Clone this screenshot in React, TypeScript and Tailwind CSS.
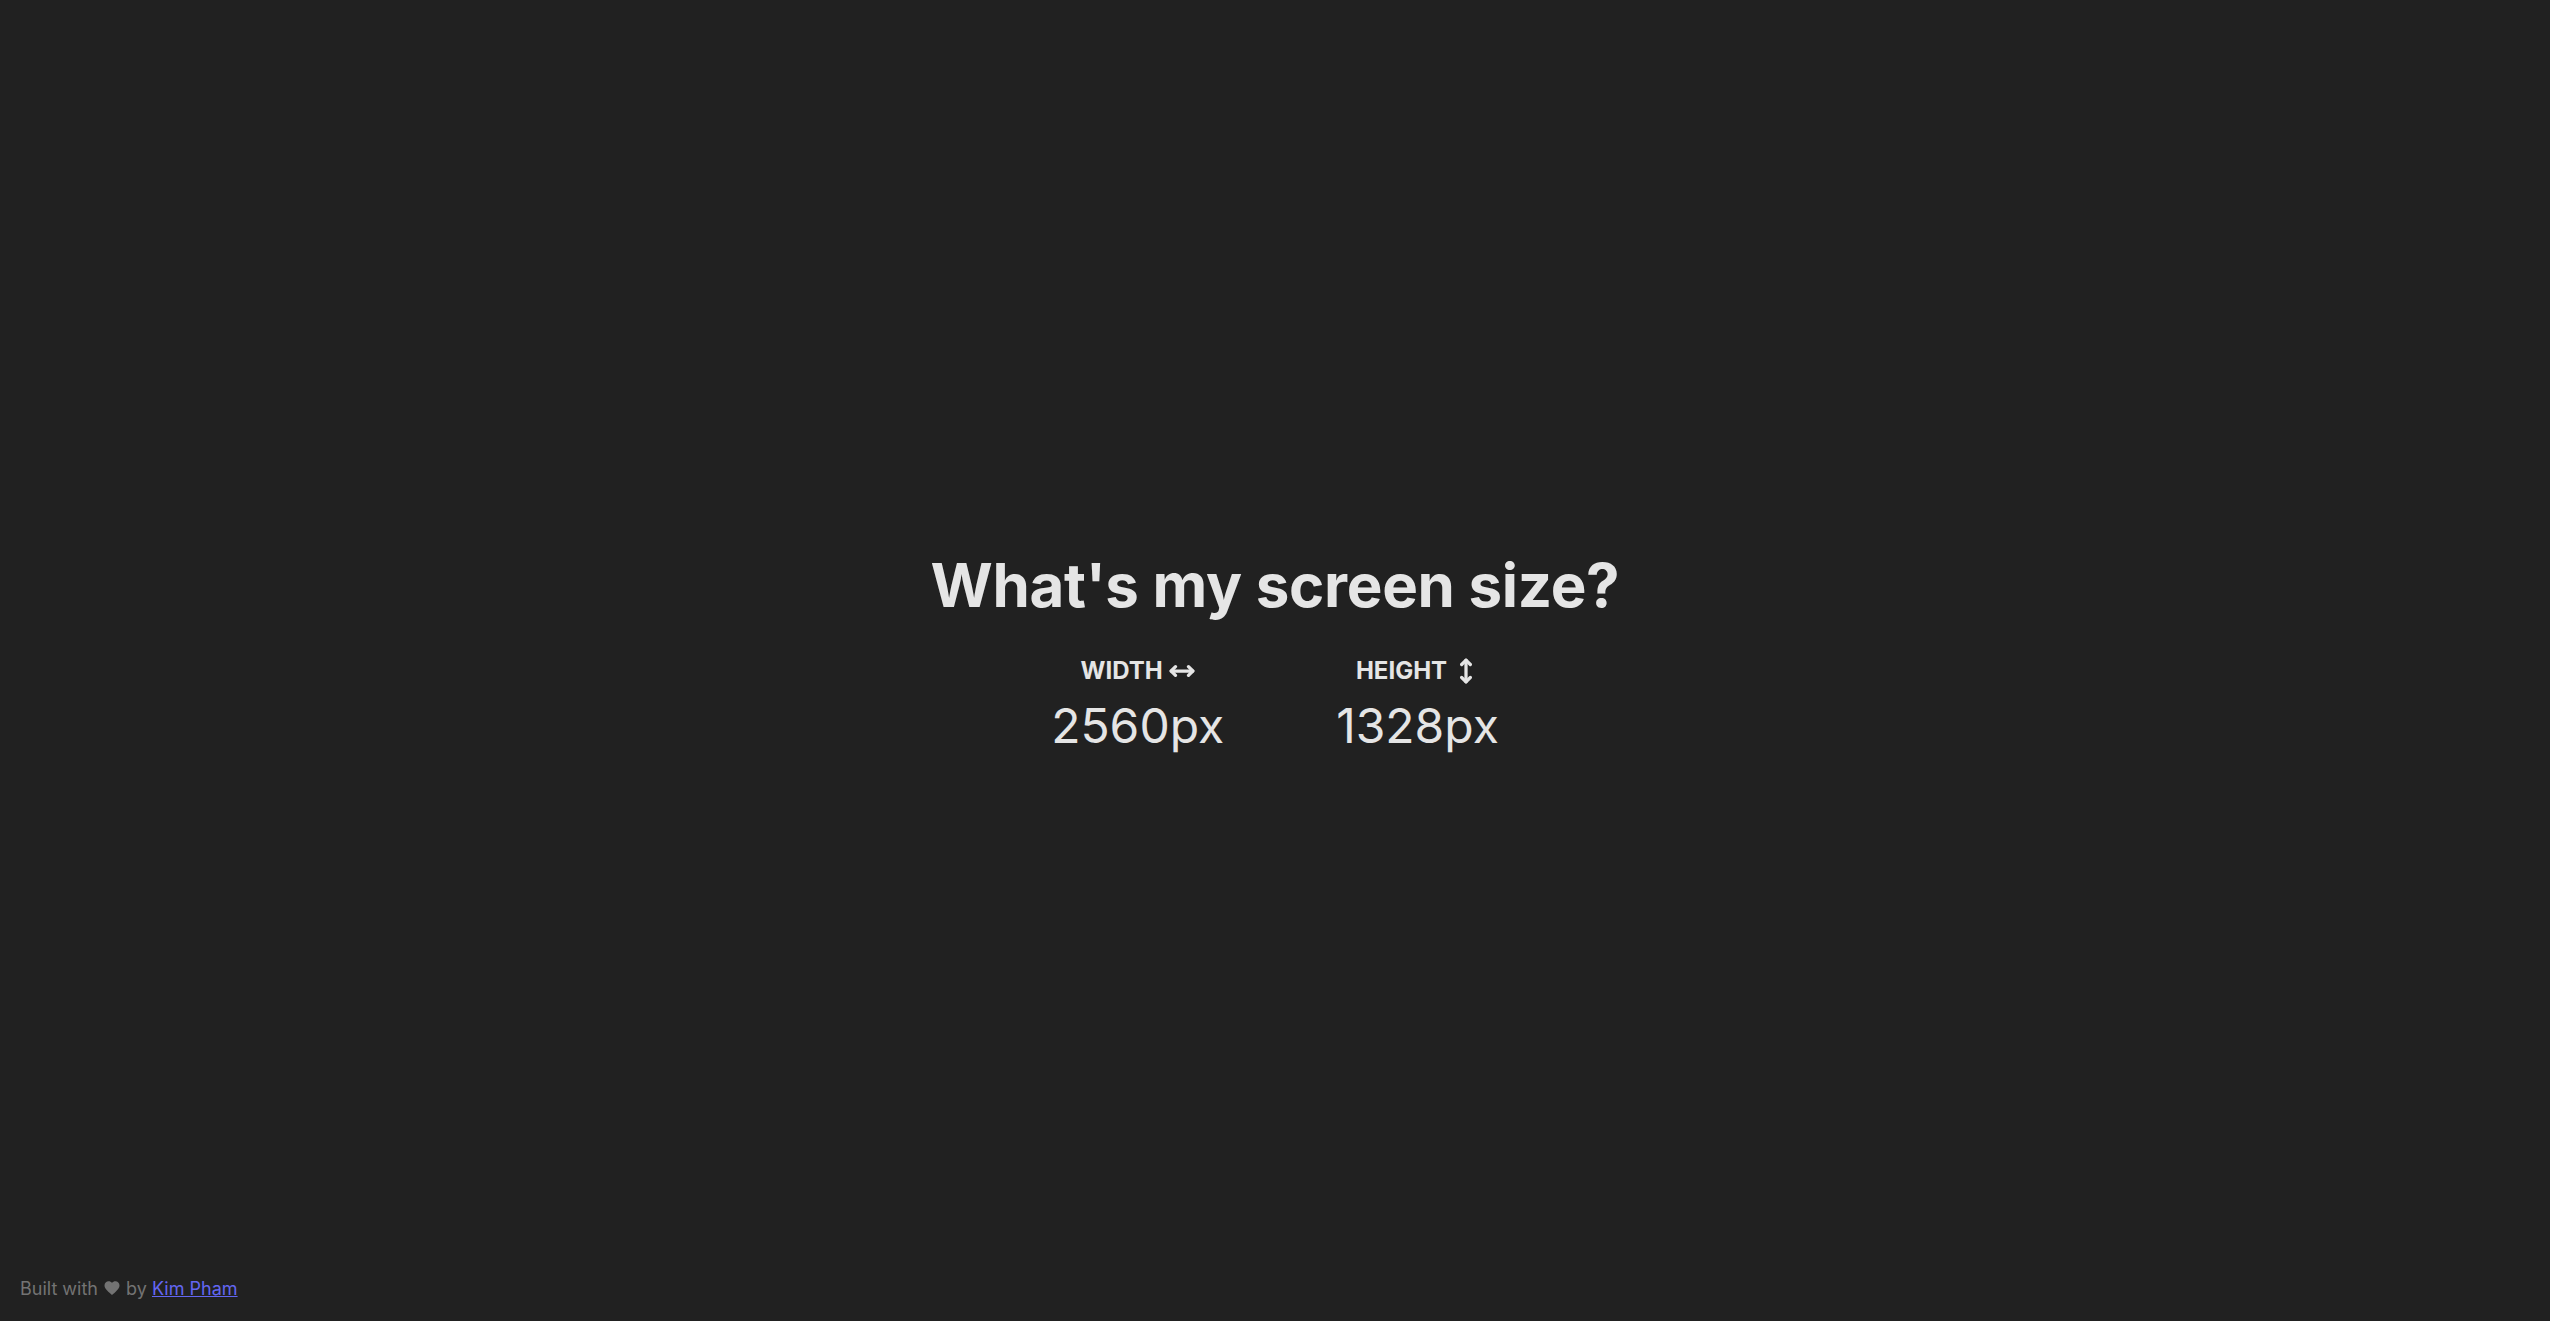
import { MoveHorizontal, MoveVertical } from "lucide-react";

function Dimension({ label, value, icon }: { label: string; value: string; icon: React.ReactNode }) {
  return (
    <div className="flex flex-col items-center">
      <div className="flex items-center gap-1.5 text-2xl font-bold">
        <span>{label}</span>
        {icon}
      </div>
      <div className="mt-[15px] text-5xl leading-none font-normal">{value}</div>
    </div>
  );
}

export default function App() {
  return (
    <div
      className="min-h-screen flex flex-col bg-[#212121] text-[#e5e5e5]"
      style={{ fontFamily: "Inter, 'Noto Sans', sans-serif" }}
    >
      <main className="flex-1 flex flex-col items-center justify-center pt-[30px]">
        <h1 className="text-6xl leading-none font-bold tracking-[-0.005em]">What's my screen size?</h1>
        <div className="mt-10 flex gap-28">
          <Dimension label="WIDTH" value="2560px" icon={<MoveHorizontal size={26} strokeWidth={3} />} />
          <Dimension label="HEIGHT" value="1328px" icon={<MoveVertical size={26} strokeWidth={3} />} />
        </div>
      </main>
      <footer className="px-5 pb-[18px] text-lg text-[#737373]">
        Built with{" "}
        <svg viewBox="0 0 24 24" className="inline-block w-[18px] h-[18px] align-[-2px] fill-[#737373]">
          <path d="M12 21.3l-1.45-1.32C5.4 15.36 2 12.28 2 8.5 2 5.42 4.42 3 7.5 3c1.74 0 3.41.81 4.5 2.09C13.09 3.81 14.76 3 16.5 3 19.58 3 22 5.42 22 8.5c0 3.78-3.4 6.86-8.55 11.54L12 21.3z" />
        </svg>{" "}
        by{" "}
        <a href="#" className="text-[#6366f1] underline">
          Kim Pham
        </a>
      </footer>
    </div>
  );
}
